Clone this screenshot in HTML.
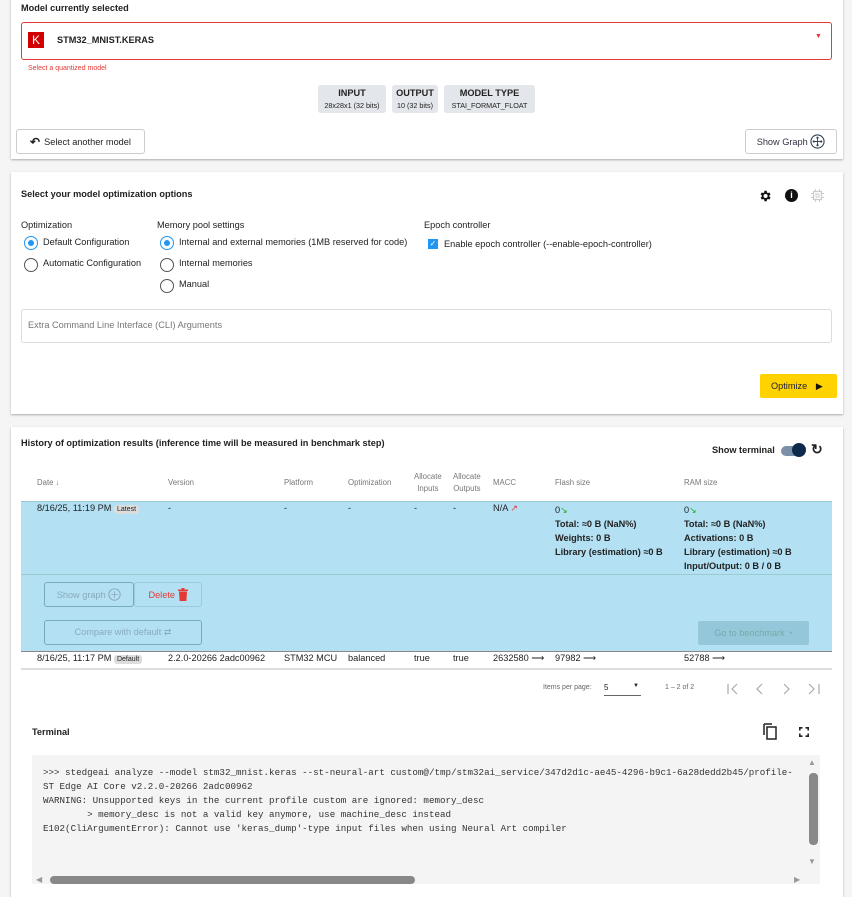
<!DOCTYPE html>
<html><head><style>
*{box-sizing:border-box;margin:0;padding:0}
body{width:852px;height:884px;background:#f5f5f5;font-family:"Liberation Sans",sans-serif;color:#222;position:relative;overflow:hidden;font-size:9.2px}
.a{position:absolute;white-space:nowrap}
.card{position:absolute;left:11px;width:832px;background:#fff;box-shadow:0 1px 2px rgba(0,0,0,.3)}
.b{font-weight:bold}
.btn{position:absolute;border:1px solid #ccc;border-radius:3px;background:#fff;font-size:9.2px;display:flex;align-items:center;justify-content:center}
.chip{position:absolute;background:#e3e6ea;border-radius:3px;text-align:center;top:85px;height:28px}
.chip b{display:block;font-size:9.2px;margin-top:3px}
.chip span{font-size:7.2px;display:block;margin-top:3px}
.radio{position:absolute;width:14px;height:14px;border:1.5px solid #555;border-radius:50%}
.radio.on{border-color:#2196f3}
.radio.on:after{content:"";position:absolute;left:2.5px;top:2.5px;width:6px;height:6px;border-radius:50%;background:#2196f3}
.th{position:absolute;font-size:7.8px;color:#777;text-align:center}
.mono{font-family:"Liberation Mono",monospace;font-size:9.2px;color:#333}
</style></head><body>

<div class="card" style="top:-2px;height:161px"></div>
<div class="a b" style="left:21px;top:3px">Model currently selected</div>
<div class="a" style="left:21px;top:22px;width:811px;height:38px;border:1px solid #e53935;border-radius:3px"></div>
<div class="a" style="left:28px;top:32px;width:16px;height:16px;background:#d00000;color:#fff;font-size:12px;text-align:center;line-height:16px">K</div>
<div class="a b" style="left:57px;top:35px">STM32_MNIST.KERAS</div>
<div class="a" style="left:815px;top:33px;font-size:7px;color:#e53935">▼</div>
<div class="a" style="left:28px;top:65px;font-size:7px;color:#e53935">Select a quantized model</div>
<div class="chip" style="left:318px;width:68px"><b>INPUT</b><span>28x28x1 (32 bits)</span></div>
<div class="chip" style="left:392px;width:46px"><b>OUTPUT</b><span>10 (32 bits)</span></div>
<div class="chip" style="left:444px;width:91px"><b>MODEL TYPE</b><span>STAI_FORMAT_FLOAT</span></div>
<div class="btn" style="left:16px;top:129px;width:129px;height:25px"><b style="font-size:12px;margin-right:4px">↶</b>Select another model</div>
<div class="btn" style="left:745px;top:129px;width:92px;height:25px;color:#334">Show Graph&nbsp;<svg width="15" height="15" viewBox="0 0 16 16"><circle cx="8" cy="8" r="7" fill="none" stroke="#345" stroke-width="1.2"/><circle cx="8" cy="4" r="1.2" fill="#345"/><circle cx="8" cy="12" r="1.2" fill="#345"/><circle cx="4" cy="8" r="1.2" fill="#345"/><circle cx="12" cy="8" r="1.2" fill="#345"/><path d="M8 4V12M4 8H12" stroke="#345"/></svg></div>

<div class="card" style="top:172px;height:242px"></div>
<div class="a b" style="left:21px;top:189px">Select your model optimization options</div>
<svg class="a" style="left:758px;top:189px" width="14" height="14" viewBox="0 0 24 24"><path fill="#111" d="M19.4 13a7.5 7.5 0 000-2l2.1-1.6-2-3.5-2.5 1a7.3 7.3 0 00-1.7-1L15 3h-4l-.4 2.9a7.3 7.3 0 00-1.7 1l-2.5-1-2 3.5L6.6 11a7.5 7.5 0 000 2l-2.1 1.6 2 3.5 2.5-1a7.3 7.3 0 001.7 1L11 21h4l.4-2.9a7.3 7.3 0 001.7-1l2.5 1 2-3.5zM13 15.5a3.5 3.5 0 110-7 3.5 3.5 0 010 7z"/></svg>
<div class="a" style="left:785px;top:189px;width:13px;height:13px;border-radius:50%;background:#111;color:#fff;font-size:9px;text-align:center;line-height:13px;font-weight:bold">i</div>
<svg class="a" style="left:811px;top:189px" width="13" height="13" viewBox="0 0 13 13"><rect x="2.5" y="2.5" width="8" height="8" fill="none" stroke="#ccc" stroke-width="1.3"/><rect x="5" y="5" width="3" height="3" fill="none" stroke="#ccc"/><path d="M4.5 0v2.5M8.5 0v2.5M4.5 10.5V13M8.5 10.5V13M0 4.5h2.5M0 8.5h2.5M10.5 4.5H13M10.5 8.5H13" stroke="#ccc"/></svg>
<div class="a" style="left:21px;top:220px">Optimization</div>
<div class="a" style="left:157px;top:220px">Memory pool settings</div>
<div class="a" style="left:424px;top:220px">Epoch controller</div>
<div class="radio on" style="left:24px;top:236px"></div><div class="a" style="left:43px;top:237px">Default Configuration</div>
<div class="radio" style="left:24px;top:258px"></div><div class="a" style="left:43px;top:258px">Automatic Configuration</div>
<div class="radio on" style="left:160px;top:236px"></div><div class="a" style="left:179px;top:237px">Internal and external memories (1MB reserved for code)</div>
<div class="radio" style="left:160px;top:258px"></div><div class="a" style="left:179px;top:258px">Internal memories</div>
<div class="radio" style="left:160px;top:279px"></div><div class="a" style="left:179px;top:279px">Manual</div>
<div class="a" style="left:428px;top:239px;width:10px;height:10px;background:#2196f3;color:#fff;font-size:8px;line-height:10px;text-align:center">✓</div>
<div class="a" style="left:444px;top:239px">Enable epoch controller (--enable-epoch-controller)</div>
<div class="a" style="left:21px;top:309px;width:811px;height:34px;border:1px solid #ddd;border-radius:3px"></div>
<div class="a" style="left:28px;top:320px;color:#777">Extra Command Line Interface (CLI) Arguments</div>
<div class="a" style="left:760px;top:374px;width:77px;height:24px;background:#ffd200;border-radius:2px;line-height:24px;padding-left:11px;color:#223">Optimize <span style="margin-left:6px;color:#111">▶</span></div>

<div class="card" style="top:427px;height:470px"></div>
<div class="a b" style="left:21px;top:438px">History of optimization results (inference time will be measured in benchmark step)</div>
<div class="a b" style="left:712px;top:445px">Show terminal</div>
<div class="a" style="left:781px;top:446px;width:24px;height:10px;border-radius:5px;background:#7c8fa8"></div>
<div class="a" style="left:792px;top:443px;width:14px;height:14px;border-radius:50%;background:#0d2a4d"></div>
<div class="a b" style="left:811px;top:441px;font-size:14px">↻</div>

<div class="th" style="left:37px;top:478px">Date ↓</div>
<div class="th" style="left:168px;top:478px">Version</div>
<div class="th" style="left:284px;top:478px">Platform</div>
<div class="th" style="left:348px;top:478px">Optimization</div>
<div class="th" style="left:414px;top:471px;line-height:12px">Allocate<br>Inputs</div>
<div class="th" style="left:453px;top:471px;line-height:12px">Allocate<br>Outputs</div>
<div class="th" style="left:493px;top:478px">MACC</div>
<div class="th" style="left:555px;top:478px">Flash size</div>
<div class="th" style="left:684px;top:478px">RAM size</div>

<div class="a" style="left:21px;top:501px;width:811px;height:150px;background:#b3e1f3;border-top:1px solid #9cc;"></div>
<div class="a" style="left:21px;top:574px;width:811px;height:1px;background:#9cc"></div>
<div class="a" style="left:37px;top:503px">8/16/25, 11:19 PM <span style="background:#ddd;border-radius:3px;font-size:7px;padding:1px 3px">Latest</span></div>
<div class="a" style="left:168px;top:503px">-</div><div class="a" style="left:284px;top:503px">-</div><div class="a" style="left:348px;top:503px">-</div><div class="a" style="left:414px;top:503px">-</div><div class="a" style="left:453px;top:503px">-</div>
<div class="a" style="left:493px;top:503px">N/A <span style="color:#e53935">↗</span></div>
<div class="a" style="left:555px;top:503px;line-height:14px">0<span style="color:#2a2">↘</span><br><b>Total: ≈0 B (NaN%)<br>Weights: 0 B<br>Library (estimation) ≈0 B</b></div>
<div class="a" style="left:684px;top:503px;line-height:14px">0<span style="color:#2a2">↘</span><br><b>Total: ≈0 B (NaN%)<br>Activations: 0 B<br>Library (estimation) ≈0 B<br>Input/Output: 0 B / 0 B</b></div>
<div class="btn" style="left:44px;top:582px;width:90px;height:25px;background:transparent;border-color:#7ab;color:#8ab">Show graph&nbsp;<svg width="13" height="13" viewBox="0 0 16 16"><circle cx="8" cy="8" r="7" fill="none" stroke="#8ab" stroke-width="1.2"/><path d="M8 4V12M4 8H12" stroke="#8ab"/></svg></div>
<div class="btn" style="left:134px;top:582px;width:68px;height:25px;background:transparent;border-color:#9cd;color:#e53935">Delete&nbsp;<svg width="10" height="13" viewBox="0 0 10 13"><path d="M0 1.5h10v1.5H0zM3.5 0h3v1.5h-3zM1 3.5h8l-.6 9.5H1.6z" fill="#e53935"/></svg></div>
<div class="btn" style="left:44px;top:620px;width:158px;height:25px;background:transparent;border-color:#7ab;color:#8ab">Compare with default ⇄</div>
<div class="a" style="left:698px;top:621px;width:111px;height:24px;background:#93c7d9;border-radius:2px;color:#7aa;text-align:center;line-height:24px">Go to benchmark ◔</div>
<div class="a" style="left:21px;top:651px;width:811px;height:1px;background:#888"></div>
<div class="a" style="left:37px;top:653px">8/16/25, 11:17 PM <span style="background:#ddd;border-radius:3px;font-size:7px;padding:1px 3px">Default</span></div>
<div class="a" style="left:168px;top:653px">2.2.0-20266 2adc00962</div>
<div class="a" style="left:284px;top:653px">STM32 MCU</div>
<div class="a" style="left:348px;top:653px">balanced</div>
<div class="a" style="left:414px;top:653px">true</div><div class="a" style="left:453px;top:653px">true</div>
<div class="a" style="left:493px;top:653px">2632580 ⟶</div>
<div class="a" style="left:555px;top:653px">97982 ⟶</div>
<div class="a" style="left:684px;top:653px">52788 ⟶</div>
<div class="a" style="left:21px;top:668px;width:811px;height:2px;background:#ddd"></div>

<div class="a" style="left:543px;top:684px;font-size:7px;color:#666">Items per page:</div>
<div class="a" style="left:604px;top:683px;width:37px;border-bottom:1px solid #666;font-size:8px;height:13px">5<span style="float:right;font-size:6px;margin-right:2px">▼</span></div>
<div class="a" style="left:665px;top:684px;font-size:7px;color:#666">1 – 2 of 2</div>
<svg class="a" style="left:726px;top:682px" width="96" height="14" viewBox="0 0 96 14"><g fill="none" stroke="#aaa" stroke-width="1.2"><path d="M2 2v10M11 2L6 7l5 5"/><path d="M36 2l-5 5 5 5"/><path d="M58 2l5 5-5 5"/><path d="M83 2l5 5-5 5M93 2v10"/></g></svg>

<div class="a b" style="left:32px;top:727px">Terminal</div>
<svg class="a" style="left:763px;top:723px" width="15" height="17" viewBox="0 0 15 17"><path d="M1 1h8M1 1v11" stroke="#222" stroke-width="1.5" fill="none"/><rect x="4" y="4" width="9" height="12" fill="none" stroke="#222" stroke-width="1.5"/></svg>
<svg class="a" style="left:799px;top:727px" width="10" height="10" viewBox="0 0 10 10"><path d="M0.8 3.5V0.8H3.5M6.5 0.8H9.2V3.5M9.2 6.5V9.2H6.5M3.5 9.2H0.8V6.5" fill="none" stroke="#222" stroke-width="1.6"/></svg>
<div class="a" style="left:32px;top:755px;width:788px;height:129px;background:#f4f4f4"></div>
<div class="a mono" style="left:43px;top:766px;line-height:14px;width:763px;overflow:hidden">&gt;&gt;&gt; stedgeai analyze --model stm32_mnist.keras --st-neural-art custom@/tmp/stm32ai_service/347d2d1c-ae45-4296-b9c1-6a28dedd2b45/profile-<br>ST Edge AI Core v2.2.0-20266 2adc00962<br>WARNING: Unsupported keys in the current profile custom are ignored: memory_desc<br>&nbsp;&nbsp;&nbsp;&nbsp;&nbsp;&nbsp;&nbsp;&nbsp;&gt; memory_desc is not a valid key anymore, use machine_desc instead<br>E102(CliArgumentError): Cannot use 'keras_dump'-type input files when using Neural Art compiler</div>
<div class="a" style="left:809px;top:773px;width:9px;height:72px;background:#888;border-radius:4px"></div>
<div class="a" style="left:808px;top:758px;font-size:8px;color:#999">▲</div>
<div class="a" style="left:808px;top:857px;font-size:8px;color:#999">▼</div>
<div class="a" style="left:36px;top:875px;font-size:8px;color:#999">◀</div>
<div class="a" style="left:794px;top:875px;font-size:8px;color:#999">▶</div>
<div class="a" style="left:50px;top:876px;width:365px;height:8px;background:#888;border-radius:4px"></div>
</body></html>
